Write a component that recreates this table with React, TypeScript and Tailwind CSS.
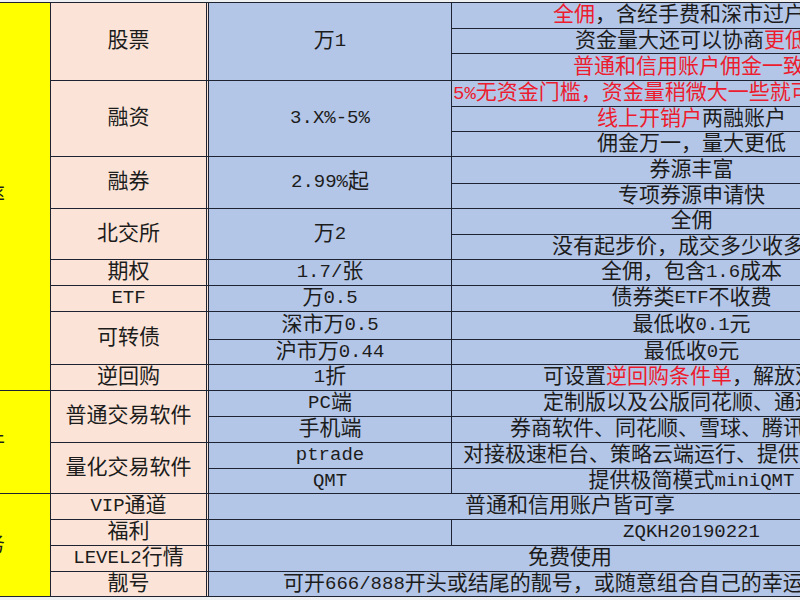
import React from 'react';

// ASCII runs are set a bit smaller, like the half-width glyphs of the sheet font
function txt(s: string) {
  const parts = s.match(/[\x20-\x7e]+|[^\x20-\x7e]+/g) || [];
  return parts.map((p, i) =>
    /^[\x20-\x7e]+$/.test(p) ? (
      <span key={i} className="text-[19px]">
        {p}
      </span>
    ) : (
      <span key={i}>{p}</span>
    )
  );
}

const base =
  'flex items-center overflow-hidden whitespace-nowrap leading-none border-b border-[#1d2330]';

function Y({ span, text }: { span: string; text: string }) {
  return (
    <div className={`${base} ${span} justify-end border-r bg-[#ffff00]`}>
      <span className="mr-[45px] shrink-0">{text}</span>
    </div>
  );
}

function S({ span = '', children }: { span?: string; children: string }) {
  return (
    <div className={`${base} ${span} justify-center border-r-[3px] border-double bg-[#fbe4d7]`}>
      {txt(children)}
    </div>
  );
}

function B({ span = '', children }: { span?: string; children?: string }) {
  return (
    <div className={`${base} ${span} justify-center border-r bg-[#b4c6e7]`}>
      {children ? txt(children) : null}
    </div>
  );
}

function R({ pad, children }: { pad?: string; children: React.ReactNode }) {
  return (
    <div className={`${base} border-r bg-[#b4c6e7] ${pad ? `justify-start ${pad}` : 'justify-center'}`}>
      {children}
    </div>
  );
}

const Red = ({ children }: { children: string }) => (
  <span className="text-[#ec1c2e]">{txt(children)}</span>
);

export default function App() {
  return (
    <div className="w-[800px] h-[600px] overflow-hidden bg-[#eef0f2] pt-[2px] text-[21px] text-[#1c1c1c] font-['Liberation_Mono','Noto_Sans_CJK_SC',monospace]">
      <div className="w-[932px] grid grid-cols-[51px_158px_243px_480px] grid-rows-[26px_25px_27px_26px_25px_25px_27px_25px_26px_25px_26px_26px_28px_25px_26px_26px_26px_26px_25px_26px_26px_26px_25px] border-t border-[#1d2330]">
        {/* 佣金 */}
        <Y span="row-span-15" text="费率" />
        <S span="row-span-3">股票</S>
        <B span="row-span-3">万1</B>
        <R pad="pl-[101px]">
          <Red>全佣</Red>
          {txt('，含经手费和深市过户费')}
        </R>
        <R pad="pl-[123px]">
          {txt('资金量大还可以协商')}
          <Red>更低</Red>
        </R>
        <R pad="pl-[121px]">
          <Red>普通和信用账户佣金一致</Red>
        </R>

        <S span="row-span-3">融资</S>
        <B span="row-span-3">3.X%-5%</B>
        <R pad="pl-[1px]">
          <Red>5%无资金门槛，资金量稍微大一些就可以更低</Red>
        </R>
        <R>
          <Red>线上开销户</Red>
          {txt('两融账户')}
        </R>
        <R>{txt('佣金万一，量大更低')}</R>

        <S span="row-span-2">融券</S>
        <B span="row-span-2">2.99%起</B>
        <R>{txt('券源丰富')}</R>
        <R>{txt('专项券源申请快')}</R>

        <S span="row-span-2">北交所</S>
        <B span="row-span-2">万2</B>
        <R>{txt('全佣')}</R>
        <R pad="pl-[100px]">{txt('没有起步价，成交多少收多少')}</R>

        <S>期权</S>
        <B>1.7/张</B>
        <R>{txt('全佣，包含1.6成本')}</R>

        <S>ETF</S>
        <B>万0.5</B>
        <R>{txt('债券类ETF不收费')}</R>

        <S span="row-span-2">可转债</S>
        <B>深市万0.5</B>
        <R>{txt('最低收0.1元')}</R>
        <B>沪市万0.44</B>
        <R>{txt('最低收0元')}</R>

        <S>逆回购</S>
        <B>1折</B>
        <R pad="pl-[91px]">
          {txt('可设置')}
          <Red>逆回购条件单</Red>
          {txt('，解放双手')}
        </R>

        {/* 软件 */}
        <Y span="row-span-4" text="软件" />
        <S span="row-span-2">普通交易软件</S>
        <B>PC端</B>
        <R pad="pl-[91px]">{txt('定制版以及公版同花顺、通达信')}</R>
        <B>手机端</B>
        <R pad="pl-[58px]">{txt('券商软件、同花顺、雪球、腾讯自选')}</R>
        <S span="row-span-2">量化交易软件</S>
        <B>ptrade</B>
        <R pad="pl-[11px]">{txt('对接极速柜台、策略云端运行、提供专属服务')}</R>
        <B>QMT</B>
        <R>{txt('提供极简模式miniQMT')}</R>

        {/* 服务 */}
        <Y span="row-span-4" text="服务" />
        <S>VIP通道</S>
        <B span="col-span-2">普通和信用账户皆可享</B>
        <S>福利</S>
        <B />
        <R>{txt('ZQKH20190221')}</R>
        <S>LEVEL2行情</S>
        <B span="col-span-2">免费使用</B>
        <S>靓号</S>
        <div className={`${base} col-span-2 justify-start pl-[74px] border-r bg-[#b4c6e7]`}>
          {txt('可开666/888开头或结尾的靓号，或随意组合自己的幸运数字')}
        </div>
      </div>
    </div>
  );
}
